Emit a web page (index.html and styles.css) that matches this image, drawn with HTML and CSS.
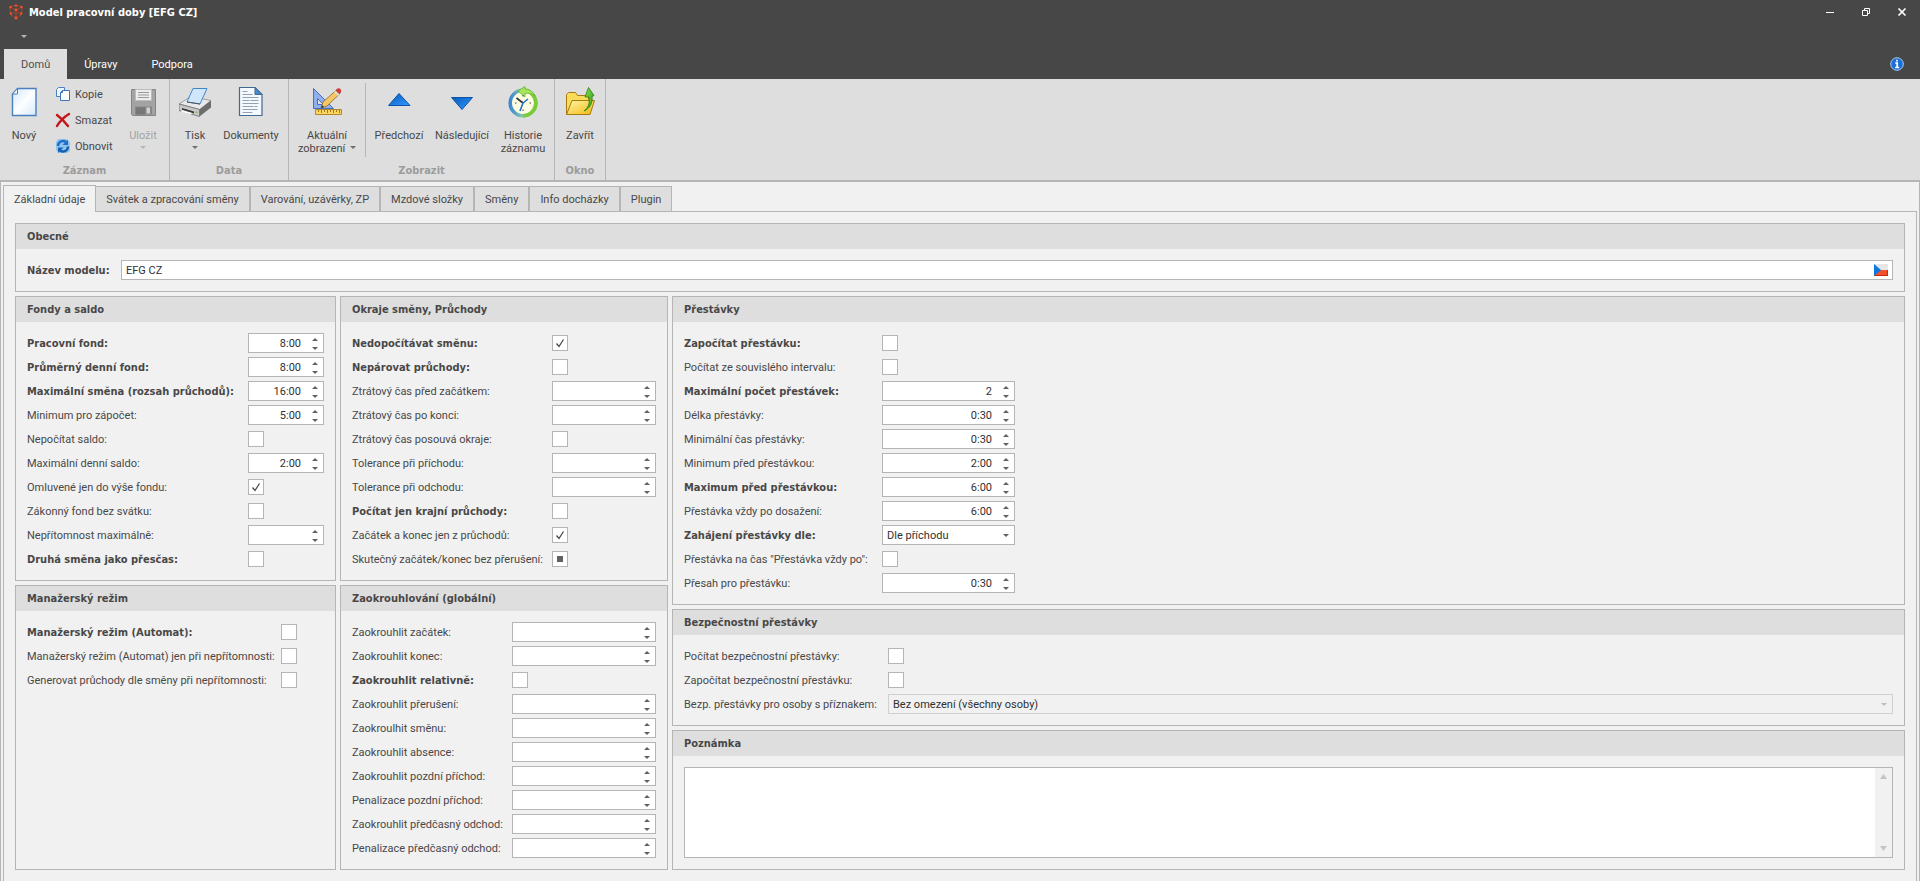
FILE: index.html
```
<!DOCTYPE html>
<html lang="cs">
<head>
<meta charset="utf-8">
<title>Model pracovní doby [EFG CZ]</title>
<link rel="stylesheet" href="styles.css">
</head>
<body>
<svg class="defs" aria-hidden="true">
  <defs>
    <linearGradient id="paper" x1="0" y1="0" x2="1" y2="1"><stop offset="0" stop-color="#d3e6fb"/><stop offset=".5" stop-color="#fdfeff"/><stop offset="1" stop-color="#d6e9fb"/></linearGradient>
    <linearGradient id="blue" x1="0" y1="0" x2="1" y2="1"><stop offset="0" stop-color="#0a58b8"/><stop offset="1" stop-color="#2f9bff"/></linearGradient>
    <linearGradient id="gold" x1="0" y1="0" x2="1" y2="1"><stop offset="0" stop-color="#fff6a8"/><stop offset="1" stop-color="#f2b90c"/></linearGradient>
    <linearGradient id="green" x1="0" y1="0" x2="1" y2="1"><stop offset="0" stop-color="#8be04a"/><stop offset="1" stop-color="#2e9a1c"/></linearGradient>
    <linearGradient id="ring" x1="0" y1="0" x2="1" y2="0"><stop offset="0" stop-color="#3f86cf"/><stop offset=".45" stop-color="#7fc6b0"/><stop offset="1" stop-color="#7ccc3a"/></linearGradient>
  </defs>
</svg>

<header class="titlebar">
  <div class="caption">
    <svg class="logo" viewBox="0 0 16 16" width="16" height="16"><path d="M2 3l6-2 6 2v7l-6 4-6-4zM2 3l6 3 6-3M8 6v8M5 8l3 2 3-2" fill="none" stroke="#a8432a" stroke-width="1"/><g fill="#f4532a"><circle cx="2.5" cy="3" r="1.2"/><circle cx="8" cy="1.6" r="1.2"/><circle cx="13.5" cy="3" r="1.2"/><circle cx="8" cy="6" r="1.4"/><circle cx="3" cy="9.5" r="1.2"/><circle cx="13" cy="9.5" r="1.2"/><circle cx="8" cy="14" r="1.5"/></g></svg>
    <h1>Model pracovní doby [EFG CZ]</h1>
    <div class="window-buttons">
      <button aria-label="Minimalizovat"><svg viewBox="0 0 10 10" width="10" height="10"><path d="M1 5.5h8" stroke="#fff"/></svg></button>
      <button aria-label="Obnovit okno"><svg viewBox="0 0 10 10" width="10" height="10"><path d="M1.5 3.5h5v5h-5zM3.5 3.5v-2h5v5h-2" fill="none" stroke="#fff"/></svg></button>
      <button aria-label="Zavřít okno"><svg viewBox="0 0 10 10" width="10" height="10"><path d="M1.500 1.500l7 7M8.500 1.500l-7 7" stroke="#fff" stroke-width="1.700"/></svg></button>
    </div>
  </div>
  <div class="quick"><button class="caret" aria-label="Panel rychlého přístupu"></button></div>
  <nav class="ribbon-tabs">
    <button class="active">Domů</button>
    <button>Úpravy</button>
    <button>Podpora</button>
    <button class="info" aria-label="Informace"><svg viewBox="0 0 14 14" width="14" height="14"><circle cx="7" cy="7" r="6.300" fill="#1d6fd6" stroke="#a9cdf5"/><path d="M7 2.800v1.800M5.200 6h2v4.200M5 10.500h4.200" stroke="#fff" stroke-width="1.700" fill="none"/></svg></button>
  </nav>
</header>

<div class="ribbon">
  <section class="group">
    <div class="tools">
      <button class="tool w42"><svg viewBox="0 0 32 32" width="32" height="32"><path d="M9.500 2.500h18.500v27H4.500V8z" fill="url(#paper)" stroke="#4a80bd" stroke-width="1.400"/><path d="M9.500 2.500V8h-5z" fill="#fff" stroke="#4a80bd"/></svg><span>Nový</span></button>
      <div class="stack">
        <button class="mini"><svg viewBox="0 0 16 16" width="16" height="16"><path d="M3.500 1.500h6v9h-8v-7z" fill="#eef6ff" stroke="#4a80bd"/><path d="M7.500 4.500h7v10h-9v-8z" fill="#fbfdff" stroke="#3c76b8"/><path d="M7.500 4.500v2h-2" fill="none" stroke="#3c76b8"/></svg>Kopie</button>
        <button class="mini"><svg viewBox="0 0 16 16" width="16" height="16"><path d="M2 3c4 3 8 7 11 11M14 2C9 5 5 9 2 14" fill="none" stroke="#c4161c" stroke-width="2.400" stroke-linecap="round"/></svg>Smazat</button>
        <button class="mini"><svg viewBox="0 0 16 16" width="16" height="16"><path d="M3 1h8l4 3v9l-3 2H4l-3-3V4z" fill="#8fc4f0"/><path d="M3 8a5 5 0 0 1 8-4" fill="none" stroke="#1e6fc4" stroke-width="2.400"/><path d="M13 1.500V7H7.500z" fill="#1e6fc4"/><path d="M13 8.500a5 5 0 0 1-8 4" fill="none" stroke="#1660b0" stroke-width="2.400"/><path d="M3 15V9.500h5.500z" fill="#1660b0"/></svg>Obnovit</button>
      </div>
      <button class="tool w46" disabled><svg viewBox="0 0 32 32" width="32" height="32"><path d="M4.500 3.500h24v26h-23l-1-1z" fill="#a3a3a3" stroke="#858585"/><path d="M8.500 3.500h16v11h-16z" fill="#ededed" stroke="#bcbcbc"/><path d="M11 6.500h11M11 9h11M11 11.500h11" stroke="#999"/><path d="M8 20.500h17v8H8z" fill="#868686"/><path d="M9 21.500h9v7H9z" fill="#777"/><path d="M19.500 21.500h3.500v6h-3.500z" fill="#d2d2d2"/></svg><span>Uložit</span><i class="caret"></i></button>
    </div>
    <h2>Záznam</h2>
  </section>
  <section class="group">
    <div class="tools">
      <button class="tool w44"><svg viewBox="0 0 32 32" width="32" height="32"><path d="M0 18L12 10.500l20 4-11.500 9z" fill="#e9e9e9" stroke="#8c8c8c" stroke-width=".8"/><path d="M0 18l20.500 5.500v7L0 24.500z" fill="#c9c9c9" stroke="#6f6f6f" stroke-width=".8"/><path d="M20.500 23.500l11.500-9v7l-11.500 9z" fill="#6d6d6d"/><path d="M8 16L14 2.500h14L21 18z" fill="#cfe6fb" stroke="#3f87c9"/><path d="M8 16l13 2" stroke="#555"/><path d="M3 22l12 3.500v2L3 24z" fill="#3b3b3b"/><path d="M3 24l10 3-1 1.500L2 26z" fill="#fafafa"/><path d="M16.500 25.500h2v1.500h-2z" fill="#73c92c"/></svg><span>Tisk</span><i class="caret"></i></button>
      <button class="tool w68"><svg viewBox="0 0 32 32" width="32" height="32"><path d="M4.500 1.500H20l7 7v21H4.500z" fill="#f4f9ff" stroke="#41688f" stroke-width="1.200"/><path d="M20 1.500l7 7h-7z" fill="#4a8bd0" stroke="#41688f"/><path d="M7.500 5.500h5M7.500 8.500h10M7.500 11.500h16M7.500 14.500h7m1 0h8M7.500 17.500h16M7.500 20.500h11m1 0h3M7.500 23.500h15M7.500 26.500h10" stroke="#93a1b0"/></svg><span>Dokumenty</span></button>
    </div>
    <h2>Data</h2>
  </section>
  <section class="group">
    <div class="tools">
      <button class="tool w70"><svg viewBox="0 0 32 32" width="32" height="32"><path d="M2.500 2.500l20 20h-20z" fill="#8fb0ec" stroke="#4470c4"/><path d="M6.500 12.500l6 6h-6z" fill="#dedede" stroke="#4470c4"/><path d="M10 22l2-6L26 3.500l3.500 3.500L16 20z" fill="#f7c766" stroke="#8a6a28" stroke-width=".8"/><path d="M24 5l2.500-2.500c2-1 4.500 1.500 3.500 3.500L28 8.500z" fill="#d43c3c"/><path d="M23 6l1.500-1.500 4 4L27 10z" fill="#d5e2d0"/><path d="M10 22l1-3 2 2z" fill="#333"/><path d="M4.500 23.500h26v5h-26z" fill="#fbd662" stroke="#b5862a"/><path d="M7.500 24v2m3-2v3m3-3v2m3-2v3m3-3v2m3-2v3m3-3v2m3-2v3" stroke="#a87612"/></svg><span>Aktuální<br>zobrazení <i class="caret inline"></i></span></button>
      <span class="divider"></span>
      <button class="tool w60"><svg viewBox="0 0 32 32" width="32" height="32"><path d="M5.500 19.500L16 7.500l11 12z" fill="url(#blue)" stroke="#0b53ac"/></svg><span>Předchozí</span></button>
      <button class="tool w66"><svg viewBox="0 0 32 32" width="32" height="32"><path d="M5.500 11.500h21L16 23.500z" fill="url(#blue)" stroke="#0b53ac"/></svg><span>Následující</span></button>
      <button class="tool w56"><svg viewBox="0 0 32 32" width="32" height="32"><circle cx="16" cy="17" r="12.800" fill="#fdfbe2" stroke="url(#ring)" stroke-width="3.600"/><path d="M16 29.800A12.800 12.800 0 0 0 16 4.200" fill="none" stroke="#7ccc3a" stroke-width="3.600"/><path d="M11 5l7-4.500v2.500c5 0 8 3 10 7-4-3-7-3-10-2.500V11z" fill="#a9e55c" stroke="#62b52c" stroke-width=".8"/><path d="M16 17L9.500 12" stroke="#333" stroke-width="1.600"/><path d="M16 17l5-4M16 17l-3 8" stroke="#1f6fd8" stroke-width="1.600"/><path d="M16 9v1.500M16 23.500V25M8 17h1.500M22.500 17H24" stroke="#444"/></svg><span>Historie<br>záznamu</span></button>
    </div>
    <h2>Zobrazit</h2>
  </section>
  <section class="group">
    <div class="tools">
      <button class="tool w44"><svg viewBox="0 0 32 32" width="32" height="32"><path d="M2.500 28V8.500l2-2h7l2 3h11v4L26 28z" fill="#f8dc5a" stroke="#a8790c"/><path d="M2.500 28.500L8 14.500h22.500L26 28.500z" fill="url(#gold)" stroke="#a8790c"/><path d="M20 25c4-3 6-7 5-14h-4L24.500 1.500 30 9.500l-2 1c1 6-2 12-8 14.500z" fill="url(#green)" stroke="#287d18" stroke-width=".8"/></svg><span>Zavřít</span></button>
    </div>
    <h2>Okno</h2>
  </section>
</div>

<div class="window">
  <nav class="tabs">
    <button class="active">Základní údaje</button>
    <button>Svátek a zpracování směny</button>
    <button>Varování, uzávěrky, ZP</button>
    <button>Mzdové složky</button>
    <button>Směny</button>
    <button>Info docházky</button>
    <button>Plugin</button>
  </nav>
  <main class="pane">
    <section class="box">
      <h3>Obecné</h3>
      <div class="fields name-fields">
        <label class="b" for="name">Název modelu:</label>
        <div class="field full"><input id="name" type="text" value="EFG CZ"><svg class="flag" viewBox="0 0 14 12" width="14" height="12"><path d="M0 0h14v6H0z" fill="#e6e6e6"/><path d="M0 6h14v6H0z" fill="#f4502a"/><path d="M0 11.500h14M13.500 6v6" stroke="#cf2a10"/><path d="M0 0l7 6-7 6z" fill="#0d78e0"/></svg></div>
      </div>
    </section>

    <div class="columns">
      <div class="column">
        <section class="box">
          <h3>Fondy a saldo</h3>
          <div class="fields fund-fields">
            <label class="b" for="f1">Pracovní fond:</label><div class="field"><input id="f1" type="text" value="8:00"><span class="spin"><button aria-label="Více"></button><button aria-label="Méně"></button></span></div>
            <label class="b" for="f2">Průměrný denní fond:</label><div class="field"><input id="f2" type="text" value="8:00"><span class="spin"><button aria-label="Více"></button><button aria-label="Méně"></button></span></div>
            <label class="b" for="f3">Maximální směna (rozsah průchodů):</label><div class="field"><input id="f3" type="text" value="16:00"><span class="spin"><button aria-label="Více"></button><button aria-label="Méně"></button></span></div>
            <label for="f4">Minimum pro zápočet:</label><div class="field"><input id="f4" type="text" value="5:00"><span class="spin"><button aria-label="Více"></button><button aria-label="Méně"></button></span></div>
            <label for="f5">Nepočítat saldo:</label><input id="f5" type="checkbox">
            <label for="f6">Maximální denní saldo:</label><div class="field"><input id="f6" type="text" value="2:00"><span class="spin"><button aria-label="Více"></button><button aria-label="Méně"></button></span></div>
            <label for="f7">Omluvené jen do výše fondu:</label><input id="f7" type="checkbox" checked>
            <label for="f8">Zákonný fond bez svátku:</label><input id="f8" type="checkbox">
            <label for="f9">Nepřítomnost maximálně:</label><div class="field"><input id="f9" type="text"><span class="spin"><button aria-label="Více"></button><button aria-label="Méně"></button></span></div>
            <label class="b" for="f10">Druhá směna jako přesčas:</label><input id="f10" type="checkbox">
          </div>
        </section>
        <section class="box grow">
          <h3>Manažerský režim</h3>
          <div class="fields manager-fields">
            <label class="b" for="m1">Manažerský režim (Automat):</label><input id="m1" type="checkbox">
            <label for="m2">Manažerský režim (Automat) jen při nepřítomnosti:</label><input id="m2" type="checkbox">
            <label for="m3">Generovat průchody dle směny při nepřítomnosti:</label><input id="m3" type="checkbox">
          </div>
        </section>
      </div>

      <div class="column">
        <section class="box">
          <h3>Okraje směny, Průchody</h3>
          <div class="fields edge-fields">
            <label class="b" for="e1">Nedopočítávat směnu:</label><input id="e1" type="checkbox" checked>
            <label class="b" for="e2">Nepárovat průchody:</label><input id="e2" type="checkbox">
            <label for="e3">Ztrátový čas před začátkem:</label><div class="field"><input id="e3" type="text"><span class="spin"><button aria-label="Více"></button><button aria-label="Méně"></button></span></div>
            <label for="e4">Ztrátový čas po konci:</label><div class="field"><input id="e4" type="text"><span class="spin"><button aria-label="Více"></button><button aria-label="Méně"></button></span></div>
            <label for="e5">Ztrátový čas posouvá okraje:</label><input id="e5" type="checkbox">
            <label for="e6">Tolerance při příchodu:</label><div class="field"><input id="e6" type="text"><span class="spin"><button aria-label="Více"></button><button aria-label="Méně"></button></span></div>
            <label for="e7">Tolerance při odchodu:</label><div class="field"><input id="e7" type="text"><span class="spin"><button aria-label="Více"></button><button aria-label="Méně"></button></span></div>
            <label class="b" for="e8">Počítat jen krajní průchody:</label><input id="e8" type="checkbox">
            <label for="e9">Začátek a konec jen z průchodů:</label><input id="e9" type="checkbox" checked>
            <label for="e10">Skutečný začátek/konec bez přerušení:</label><input id="e10" type="checkbox" class="mixed" aria-checked="mixed">
          </div>
        </section>
        <section class="box grow">
          <h3>Zaokrouhlování (globální)</h3>
          <div class="fields round-fields">
            <label for="z1">Zaokrouhlit začátek:</label><div class="field"><input id="z1" type="text"><span class="spin"><button aria-label="Více"></button><button aria-label="Méně"></button></span></div>
            <label for="z2">Zaokrouhlit konec:</label><div class="field"><input id="z2" type="text"><span class="spin"><button aria-label="Více"></button><button aria-label="Méně"></button></span></div>
            <label class="b" for="z3">Zaokrouhlit relativně:</label><input id="z3" type="checkbox">
            <label for="z4">Zaokrouhlit přerušení:</label><div class="field"><input id="z4" type="text"><span class="spin"><button aria-label="Více"></button><button aria-label="Méně"></button></span></div>
            <label for="z5">Zaokroulhit směnu:</label><div class="field"><input id="z5" type="text"><span class="spin"><button aria-label="Více"></button><button aria-label="Méně"></button></span></div>
            <label for="z6">Zaokrouhlit absence:</label><div class="field"><input id="z6" type="text"><span class="spin"><button aria-label="Více"></button><button aria-label="Méně"></button></span></div>
            <label for="z7">Zaokrouhlit pozdní příchod:</label><div class="field"><input id="z7" type="text"><span class="spin"><button aria-label="Více"></button><button aria-label="Méně"></button></span></div>
            <label for="z8">Penalizace pozdní příchod:</label><div class="field"><input id="z8" type="text"><span class="spin"><button aria-label="Více"></button><button aria-label="Méně"></button></span></div>
            <label for="z9">Zaokrouhlit předčasný odchod:</label><div class="field"><input id="z9" type="text"><span class="spin"><button aria-label="Více"></button><button aria-label="Méně"></button></span></div>
            <label for="z10">Penalizace předčasný odchod:</label><div class="field"><input id="z10" type="text"><span class="spin"><button aria-label="Více"></button><button aria-label="Méně"></button></span></div>
          </div>
        </section>
      </div>

      <div class="column">
        <section class="box">
          <h3>Přestávky</h3>
          <div class="fields break-fields">
            <label class="b" for="p1">Započítat přestávku:</label><input id="p1" type="checkbox">
            <label for="p2">Počítat ze souvislého intervalu:</label><input id="p2" type="checkbox">
            <label class="b" for="p3">Maximální počet přestávek:</label><div class="field"><input id="p3" type="text" value="2"><span class="spin"><button aria-label="Více"></button><button aria-label="Méně"></button></span></div>
            <label for="p4">Délka přestávky:</label><div class="field"><input id="p4" type="text" value="0:30"><span class="spin"><button aria-label="Více"></button><button aria-label="Méně"></button></span></div>
            <label for="p5">Minimální čas přestávky:</label><div class="field"><input id="p5" type="text" value="0:30"><span class="spin"><button aria-label="Více"></button><button aria-label="Méně"></button></span></div>
            <label for="p6">Minimum před přestávkou:</label><div class="field"><input id="p6" type="text" value="2:00"><span class="spin"><button aria-label="Více"></button><button aria-label="Méně"></button></span></div>
            <label class="b" for="p7">Maximum před přestávkou:</label><div class="field"><input id="p7" type="text" value="6:00"><span class="spin"><button aria-label="Více"></button><button aria-label="Méně"></button></span></div>
            <label for="p8">Přestávka vždy po dosažení:</label><div class="field"><input id="p8" type="text" value="6:00"><span class="spin"><button aria-label="Více"></button><button aria-label="Méně"></button></span></div>
            <label class="b" for="p9">Zahájení přestávky dle:</label><select id="p9"><option>Dle příchodu</option></select>
            <label for="p10">Přestávka na čas "Přestávka vždy po":</label><input id="p10" type="checkbox">
            <label for="p11">Přesah pro přestávku:</label><div class="field"><input id="p11" type="text" value="0:30"><span class="spin"><button aria-label="Více"></button><button aria-label="Méně"></button></span></div>
          </div>
        </section>
        <section class="box">
          <h3>Bezpečnostní přestávky</h3>
          <div class="fields safety-fields">
            <label for="b1">Počítat bezpečnostní přestávky:</label><input id="b1" type="checkbox">
            <label for="b2">Započítat bezpečnostní přestávku:</label><input id="b2" type="checkbox">
            <label for="b3">Bezp. přestávky pro osoby s příznakem:</label><select id="b3" disabled><option>Bez omezení (všechny osoby)</option></select>
          </div>
        </section>
        <section class="box grow">
          <h3 id="note-title">Poznámka</h3>
          <div class="note">
            <textarea aria-labelledby="note-title"></textarea>
            <div class="scroll"><button aria-label="Nahoru"></button><button aria-label="Dolů"></button></div>
          </div>
        </section>
      </div>
    </div>
  </main>
</div>
</body>
</html>
```

FILE: styles.css
```
* { box-sizing: border-box; }

body {
  margin: 0;
  min-height: 100vh;
  display: flex;
  flex-direction: column;
  background: #f1f1f1;
  color: #484848;
  font: 11px/13px Roboto, "Noto Sans", sans-serif;
}

h1, h2, h3 {
  margin: 0;
  font: bold 11px/13px "DejaVu Sans Condensed", "Noto Sans", sans-serif;
}

button, input, select, textarea {
  margin: 0;
  padding: 0;
  border: 0;
  background: none;
  color: inherit;
  font: inherit;
}

.defs { position: absolute; width: 0; height: 0; }

.caret {
  display: block;
  width: 6px;
  height: 3px;
  background: #707070;
  clip-path: polygon(0 0, 100% 0, 50% 100%);
}

/* Title bar */
.titlebar { background: #474747; color: #fff; }
.caption { display: flex; align-items: center; height: 24px; padding-left: 8px; }
.caption h1 { margin-left: 5px; flex: 1; }
.window-buttons { display: flex; }
.window-buttons button { width: 36px; height: 24px; }
.window-buttons svg { display: block; margin: auto; }
.quick { height: 25px; padding: 11px 21px; }
.quick .caret { background: #b5b5b5; }
.ribbon-tabs { display: flex; padding-left: 4px; height: 30px; align-items: stretch; }
.ribbon-tabs button { padding: 0 17px; }
.ribbon-tabs .active { background: #dedede; color: #505050; }
.ribbon-tabs .info { margin-left: auto; padding: 0 16px 0 0; }
.info svg { display: block; }

/* Ribbon */
.ribbon { display: flex; background: #dedede; border-bottom: 2px solid #b5b5b5; }
.group { border-right: 1px solid #b5b5b5; padding: 2px 3px 3px; }
.group h2 { text-align: center; color: #9c9c9c; }
.tools { display: flex; height: 80px; margin-bottom: 3px; }
.tool {
  display: flex;
  flex-direction: column;
  align-items: center;
  padding-top: 5px;
  white-space: nowrap;
}
.tool span { margin-top: 11px; }
.tool > .caret { margin-top: 4px; }
.tool:disabled { color: #a3a3a3; }
.tool:disabled .caret { background: #b5b5b5; }
.caret.inline { display: inline-block; margin-left: 2px; vertical-align: 3px; }
.w42 { width: 42px; }
.w44 { width: 44px; }
.w46 { width: 46px; }
.w56 { width: 56px; }
.w60 { width: 60px; }
.w66 { width: 66px; }
.w68 { width: 68px; }
.w70 { width: 70px; }
.divider { width: 1px; height: 74px; margin: 2px 3px; background: #b5b5b5; }
.stack { display: flex; flex-direction: column; width: 75px; padding-left: 10px; }
.mini { display: flex; align-items: center; gap: 4px; height: 26px; }

/* Document tabs */
.window {
  flex: 1;
  display: flex;
  flex-direction: column;
  padding: 3px 2px 0;
  border: solid #b5b5b5;
  border-width: 0 1px;
}
.tabs { display: flex; align-items: flex-end; margin-bottom: -1px; }
.tabs button {
  height: 26px;
  padding: 0 10px;
  border: 1px solid #b5b5b5;
  border-left-width: 0;
  background: #dedede;
}
.tabs button + button + button { border-left-width: 1px; }
.tabs .active {
  position: relative;
  height: 27px;
  border-left-width: 1px;
  border-bottom: 0;
  background: #f1f1f1;
}
.pane {
  flex: 1;
  padding: 11px;
  border: 1px solid #b5b5b5;
  border-bottom: 0;
}

/* Group boxes */
.box { border: 1px solid #b5b5b5; display: flex; flex-direction: column; }
.box h3 { height: 25px; padding: 6px 11px; background: #dedede; }
.grow { flex: 1; }
.columns {
  display: grid;
  grid-template-columns: 321px 328px minmax(0, 1fr);
  gap: 4px;
  margin-top: 4px;
}
.column { display: flex; flex-direction: column; gap: 4px; }
.fields {
  display: grid;
  grid-auto-rows: 20px;
  row-gap: 4px;
  align-items: center;
  padding: 11px;
}
label { white-space: nowrap; }
.b { font: bold 11px/13px "DejaVu Sans Condensed", "Noto Sans", sans-serif; }
.name-fields { grid-template-columns: 94px minmax(0, 1fr); }
.fund-fields { grid-template-columns: 221px minmax(0, 1fr); }
.manager-fields { grid-template-columns: 254px minmax(0, 1fr); }
.edge-fields { grid-template-columns: 200px minmax(0, 1fr); }
.round-fields { grid-template-columns: 160px minmax(0, 1fr); }
.break-fields { grid-template-columns: 198px 133px; }
.safety-fields { grid-template-columns: 204px minmax(0, 1fr); }

.field {
  display: flex;
  align-items: center;
  height: 20px;
  background: #fff;
  border: 1px solid #b5b5b5;
  color: #303030;
}
.field input { flex: 1; min-width: 0; height: 18px; padding-right: 5px; text-align: right; }
.field.full input { padding-left: 4px; text-align: left; }
.flag { margin-right: 4px; }
.spin { width: 17px; height: 18px; }
.spin button { display: block; width: 17px; height: 9px; padding: 4px 5px 2px 6px; }
.spin button::before {
  content: "";
  display: block;
  width: 6px;
  height: 3px;
  background: #606060;
  clip-path: polygon(50% 0, 100% 100%, 0 100%);
}
.spin button + button::before { clip-path: polygon(0 0, 100% 0, 50% 100%); }

input[type="checkbox"] {
  appearance: none;
  width: 16px;
  height: 16px;
  border: 1px solid #b5b5b5;
  background: #fff center no-repeat;
}
input[type="checkbox"]:checked {
  background-image: url("data:image/svg+xml,%3Csvg xmlns='http://www.w3.org/2000/svg' width='14' height='14'%3E%3Cpath d='M3.500 7.500l2.500 3 4.500-7' fill='none' stroke='%23484848' stroke-width='1.300'/%3E%3C/svg%3E");
}
input[type="checkbox"].mixed { background: linear-gradient(#606060, #606060) center / 6px 6px no-repeat #fff; }

select {
  appearance: none;
  width: 100%;
  height: 20px;
  padding: 0 20px 0 4px;
  border: 1px solid #b5b5b5;
  color: #303030;
  background: #fff right 5px center no-repeat url("data:image/svg+xml,%3Csvg xmlns='http://www.w3.org/2000/svg' width='6' height='3'%3E%3Cpath d='M0 0h6L3 3z' fill='%23606060'/%3E%3C/svg%3E");
}
select:disabled {
  opacity: 1;
  border-color: #d0d0d0;
  background-color: #f1f1f1;
  background-image: url("data:image/svg+xml,%3Csvg xmlns='http://www.w3.org/2000/svg' width='6' height='3'%3E%3Cpath d='M0 0h6L3 3z' fill='%23bdbdbd'/%3E%3C/svg%3E");
}

.note {
  flex: 1;
  display: flex;
  margin: 11px;
  border: 1px solid #b5b5b5;
  background: #fff;
}
.note textarea { flex: 1; min-height: 60px; resize: none; }
.scroll {
  width: 17px;
  display: flex;
  flex-direction: column;
  justify-content: space-between;
  background: #f1f1f1;
}
.scroll button { height: 17px; padding: 6px 5px; }
.scroll button::before {
  content: "";
  display: block;
  width: 7px;
  height: 5px;
  background: #c4c4c4;
  clip-path: polygon(50% 0, 100% 100%, 0 100%);
}
.scroll button + button::before { clip-path: polygon(0 0, 100% 0, 50% 100%); }
```
